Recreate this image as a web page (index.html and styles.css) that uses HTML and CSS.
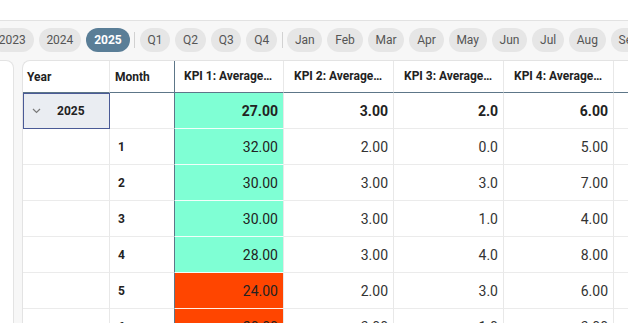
FILE: index.html
```html
<!DOCTYPE html>
<html lang="en">

<head>
    <meta charset="UTF-8">
    <meta name="viewport" content="width=device-width, initial-scale=1.0">
    <title>KPI Monitor</title>
    <link rel="stylesheet" href="styles.css">
</head>

<body>
    <div class="topbar"></div>

    <!-- Filtros de período -->
    <div class="filters">
        <span class="pill">2023</span>
        <span class="pill">2024</span>
        <span class="pill active">2025</span>
        <span class="sep"></span>
        <span class="pill">Q1</span>
        <span class="pill">Q2</span>
        <span class="pill">Q3</span>
        <span class="pill">Q4</span>
        <span class="sep"></span>
        <span class="pill">Jan</span>
        <span class="pill">Feb</span>
        <span class="pill">Mar</span>
        <span class="pill">Apr</span>
        <span class="pill">May</span>
        <span class="pill">Jun</span>
        <span class="pill">Jul</span>
        <span class="pill">Aug</span>
        <span class="pill">Sep</span>
    </div>

    <div class="main">
        <aside class="side"></aside>

        <section class="card">
            <div class="grid">
                <div class="hd">Year</div>
                <div class="hd">Month</div>
                <div class="hd kpi first">KPI 1: Average of score</div>
                <div class="hd kpi">KPI 2: Average of score</div>
                <div class="hd kpi">KPI 3: Average of score</div>
                <div class="hd kpi">KPI 4: Average of score</div>
                <div class="hd"></div>

                <div class="cell year selected">
                    <svg class="chev" width="9" height="6" viewBox="0 0 9 6">
                        <path d="M1 1l3.5 3.5L8 1" fill="none" stroke="#7a7a7a" stroke-width="1.2"/>
                    </svg>
                    <b>2025</b>
                </div>
                <div class="cell month"></div>
                <div class="cell num first good total">27.00</div>
                <div class="cell num total">3.00</div>
                <div class="cell num total">2.0</div>
                <div class="cell num total">6.00</div>
                <div class="cell"></div>

                <div class="cell"></div>
                <div class="cell month">1</div>
                <div class="cell num first good">32.00</div>
                <div class="cell num">2.00</div>
                <div class="cell num">0.0</div>
                <div class="cell num">5.00</div>
                <div class="cell"></div>

                <div class="cell"></div>
                <div class="cell month">2</div>
                <div class="cell num first good">30.00</div>
                <div class="cell num">3.00</div>
                <div class="cell num">3.0</div>
                <div class="cell num">7.00</div>
                <div class="cell"></div>

                <div class="cell"></div>
                <div class="cell month">3</div>
                <div class="cell num first good">30.00</div>
                <div class="cell num">3.00</div>
                <div class="cell num">1.0</div>
                <div class="cell num">4.00</div>
                <div class="cell"></div>

                <div class="cell"></div>
                <div class="cell month">4</div>
                <div class="cell num first good">28.00</div>
                <div class="cell num">3.00</div>
                <div class="cell num">4.0</div>
                <div class="cell num">8.00</div>
                <div class="cell"></div>

                <div class="cell"></div>
                <div class="cell month">5</div>
                <div class="cell num first bad">24.00</div>
                <div class="cell num">2.00</div>
                <div class="cell num">3.0</div>
                <div class="cell num">6.00</div>
                <div class="cell"></div>

                <div class="cell"></div>
                <div class="cell month">6</div>
                <div class="cell num first bad">20.00</div>
                <div class="cell num">3.00</div>
                <div class="cell num">1.0</div>
                <div class="cell num">3.00</div>
                <div class="cell"></div>
            </div>
        </section>
    </div>
</body>

</html>
```

FILE: styles.css
```css
body {
    margin: 0;
    background-color: #f7f7f7;
    font-family: Roboto, 'Liberation Sans', sans-serif;
    color: #333;
    overflow: hidden;
}

.topbar {
    height: 20px;
    background-color: #fff;
    border-bottom: 1px solid #e2e2e2;
}

/* Barra de filtros */
.filters {
    display: flex;
    align-items: center;
    gap: 5px;
    margin-left: -9px;
    padding-top: 7px;
    white-space: nowrap;
}

.pill {
    flex: none;
    height: 24px;
    line-height: 24px;
    padding: 0 7.8px;
    border-radius: 12px;
    background-color: #e6e6e6;
    color: #555;
    font-size: 12px;
    font-weight: 400;
}

.pill.active {
    background-color: #5a7e97;
    color: #fff;
    font-weight: 700;
    padding: 0 8px;
}

.sep {
    flex: none;
    width: 1px;
    height: 16px;
    margin: 0 -0.5px;
    background-color: #d2d2d2;
}

.main {
    display: flex;
    gap: 8px;
    margin-top: 8px;
}

.side {
    flex: none;
    width: 13px;
    height: 300px;
    background-color: #fff;
    border: 1px solid #e3e3e3;
    border-left: none;
    border-top-right-radius: 8px;
}

.card {
    flex: 1;
    min-width: 0;
    background-color: #fff;
    border: 1px solid #e3e3e3;
    border-right: none;
    border-top-left-radius: 8px;
    overflow: hidden;
}

/* Tabela */
.grid {
    display: grid;
    grid-template-columns: 87px 64px 110px 110px 110px 110px 60px;
    grid-auto-rows: 36px;
    grid-template-rows: 32px;
}

.hd,
.cell {
    box-sizing: border-box;
    border-right: 1px solid #e8e8e8;
    border-bottom: 1px solid #ebebeb;
    display: flex;
    align-items: center;
    white-space: nowrap;
    overflow: hidden;
}

.hd {
    border-bottom: 1px solid #5d7688;
    padding: 0 4px;
    font-size: 12px;
    font-weight: 700;
    color: #222;
}

.hd:nth-child(2) {
    padding-left: 5px;
    border-right: none;
}

.hd.kpi {
    display: block;
    line-height: 31px;
    padding: 0 10px;
    text-overflow: ellipsis;
}

.hd.kpi.first {
    padding-left: 9px;
}

.first {
    border-left: 1px solid #5d7688;
}

.cell.month {
    border-right: none;
    padding-left: 8px;
    font-size: 12px;
    font-weight: 700;
    color: #222;
}

.cell.year {
    padding-left: 9px;
    gap: 16px;
    font-size: 12px;
    color: #222;
}

.cell.selected {
    background-color: #eaedf2;
    outline: 1px solid #4a5a96;
    outline-offset: -1px;
}

.num {
    justify-content: flex-end;
    padding-right: 5px;
    font-size: 14px;
}

.total {
    font-weight: 700;
    color: #222;
}

.good {
    background-color: #7fffd4;
    border-bottom-color: #f2fffa;
    color: #222;
}

.bad {
    background-color: #ff4500;
    border-bottom-color: #ffeee6;
    color: #222;
}
```
